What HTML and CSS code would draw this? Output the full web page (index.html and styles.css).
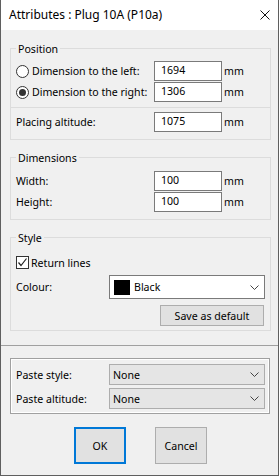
FILE: index.html
```html
<!DOCTYPE html>
<html>
<head>
<meta charset="utf-8">
<link rel="stylesheet" href="styles.css">
</head>
<body>
<div class="window">
  <div class="titlebar">
    <span class="title">Attributes : Plug 10A (P10a)</span>
    <svg class="close" width="10" height="10" viewBox="0 0 10 10"><path d="M0.5 0.5L9.5 9.5M9.5 0.5L0.5 9.5" stroke="#111" stroke-width="1" fill="none"/></svg>
  </div>
  <div class="content">
    <div class="group g1">
      <div class="legend">Position</div>
      <div class="row first">
        <div class="label"><span class="radio"></span>Dimension to the left:</div>
        <div class="input">1694</div><span class="unit">mm</span>
      </div>
      <div class="row gap1">
        <div class="label"><span class="radio checked"></span>Dimension to the right:</div>
        <div class="input">1306</div><span class="unit">mm</span>
      </div>
      <div class="sep"></div>
      <div class="row after-sep">
        <div class="label">Placing altitude:</div>
        <div class="input">1075</div><span class="unit">mm</span>
      </div>
    </div>

    <div class="group g2">
      <div class="legend">Dimensions</div>
      <div class="row first2">
        <div class="label">Width:</div>
        <div class="input">100</div><span class="unit">mm</span>
      </div>
      <div class="row gap1">
        <div class="label">Height:</div>
        <div class="input">100</div><span class="unit">mm</span>
      </div>
    </div>

    <div class="group g3">
      <div class="legend">Style</div>
      <div class="check-row">
        <span class="checkbox"><svg width="11" height="11" viewBox="0 0 11 11"><path d="M1.5 5.5L4 8.5L9.5 1.5" stroke="#222" stroke-width="1.2" fill="none"/></svg></span>Return lines
      </div>
      <div class="colour-row">
        <div class="label short">Colour:</div>
        <div class="combo white">
          <span class="swatch"></span><span class="combo-text">Black</span>
          <svg class="chev" width="9" height="5" viewBox="0 0 9 5"><path d="M0.5 0.5L4.5 4.5L8.5 0.5" stroke="#444" stroke-width="1" fill="none"/></svg>
        </div>
      </div>
      <div class="save-row">
        <div class="button save">Save as default</div>
      </div>
    </div>

    <div class="hsep"></div>

    <div class="frame">
      <div class="paste-row">
        <div class="label short">Paste style:</div>
        <div class="combo grey">
          <span class="combo-text">None</span>
          <svg class="chev" width="9" height="5" viewBox="0 0 9 5"><path d="M0.5 0.5L4.5 4.5L8.5 0.5" stroke="#444" stroke-width="1" fill="none"/></svg>
        </div>
      </div>
      <div class="paste-row second">
        <div class="label short">Paste altitude:</div>
        <div class="combo grey">
          <span class="combo-text">None</span>
          <svg class="chev" width="9" height="5" viewBox="0 0 9 5"><path d="M0.5 0.5L4.5 4.5L8.5 0.5" stroke="#444" stroke-width="1" fill="none"/></svg>
        </div>
      </div>
    </div>

    <div class="buttons">
      <div class="button ok">OK</div>
      <div class="button cancel">Cancel</div>
    </div>
  </div>
</div>
</body>
</html>
```
FILE: styles.css
```css
* { box-sizing: border-box; }
html, body { margin: 0; padding: 0; background: #f0f0f0; }
body {
  font-family: "Noto Sans", "Open Sans", sans-serif;
  font-size: 10.6px;
  color: #000;
  white-space: nowrap;
}
.window {
  width: 279px;
  height: 476px;
  background: #f0f0f0;
  border-left: 1px solid #5f5f5f;
  border-right: 1px solid #5f5f5f;
  border-bottom: 1px solid #5f5f5f;
}
.titlebar {
  height: 30px;
  background: #fff;
  display: flex;
  align-items: center;
  justify-content: space-between;
  padding: 0 8px 0 8px;
}
.title { font-size: 12px; line-height: 16px; }
.close { display: block; margin-top: 0; }

.content { padding: 18px 0 0 9px; }

.group {
  width: 261px;
  border: 1px solid #dcdcdc;
  padding: 0 0 0 5px;
}
.legend {
  width: max-content;
  margin: -8px 0 0 0;
  padding: 0 2px;
  height: 16px;
  line-height: 16px;
  background: #f0f0f0;
}
.g1 { height: 92px; }
.g2 { height: 63px; margin-top: 17px; }
.g3 { height: 94px; margin-top: 17px; }

.row {
  display: flex;
  align-items: center;
  height: 20px;
}
.row.first { margin-top: 4px; }
.row.first2 { margin-top: 5px; }
.row.gap1 { margin-top: 1px; }
.row.after-sep { margin-top: 4px; }
.sep {
  height: 1px;
  background: #dcdcdc;
  margin: 5px 0 0 -5px;
  width: 259px;
}
.label {
  width: 138px;
  flex: none;
  display: flex;
  align-items: center;
  line-height: 16px;
}
.label.short { width: 93px; }
.radio {
  width: 13px;
  height: 13px;
  border: 1px solid #333;
  border-radius: 50%;
  background: #fff;
  margin-right: 3px;
  flex: none;
  display: flex;
  align-items: center;
  justify-content: center;
}
.radio.checked::after {
  content: "";
  width: 7px;
  height: 7px;
  border-radius: 50%;
  background: #333;
}
.input {
  width: 68px;
  height: 20px;
  border: 1px solid #7a7a7a;
  background: #fff;
  padding: 0 0 0 6px;
  line-height: 17px;
  flex: none;
}
.unit { margin-left: 2px; line-height: 16px; }

.check-row {
  display: flex;
  align-items: center;
  height: 13px;
  margin-top: 10px;
  line-height: 16px;
}
.checkbox {
  width: 13px;
  height: 13px;
  border: 1px solid #333;
  background: #fff;
  margin-right: 2px;
  display: flex;
  align-items: center;
  justify-content: center;
  flex: none;
}
.checkbox svg { display: block; }
.colour-row {
  display: flex;
  align-items: center;
  margin-top: 6px;
}
.combo {
  width: 156px;
  display: flex;
  align-items: center;
  border: 1px solid #7a7a7a;
  flex: none;
}
.combo.white { height: 24px; background: #fff; padding-left: 4px; }
.combo.grey { height: 21px; background: #e5e5e5; border-color: #adadad; padding-left: 3px; }
.swatch {
  width: 16px;
  height: 15px;
  background: #000;
  margin-right: 4px;
  flex: none;
}
.combo-text { flex: 1; line-height: 16px; }
.chev { display: block; margin-right: 5px; flex: none; }

.save-row { display: flex; margin-top: 6px; padding-left: 144px; }
.button {
  background: #e1e1e1;
  border: 1px solid #adadad;
  display: flex;
  align-items: center;
  justify-content: center;
  line-height: 16px;
}
.save { width: 104px; height: 21px; }

.hsep {
  height: 1px;
  background: #a0a0a0;
  margin: 14px 0 0 -9px;
  width: 277px;
}
.frame {
  width: 260px;
  height: 56px;
  margin-top: 12px;
  border: 1px solid #a0a0a0;
  box-shadow: inset 0 0 0 1px #fff;
  padding: 5px 0 0 5px;
}
.paste-row { display: flex; align-items: center; height: 21px; }
.paste-row.second { margin-top: 3px; }

.buttons {
  display: flex;
  gap: 29px;
  margin-top: 13px;
  padding-left: 64px;
}
.ok { width: 52px; height: 37px; border: 2px solid #0078d7; }
.cancel { width: 52px; height: 37px; }
```
